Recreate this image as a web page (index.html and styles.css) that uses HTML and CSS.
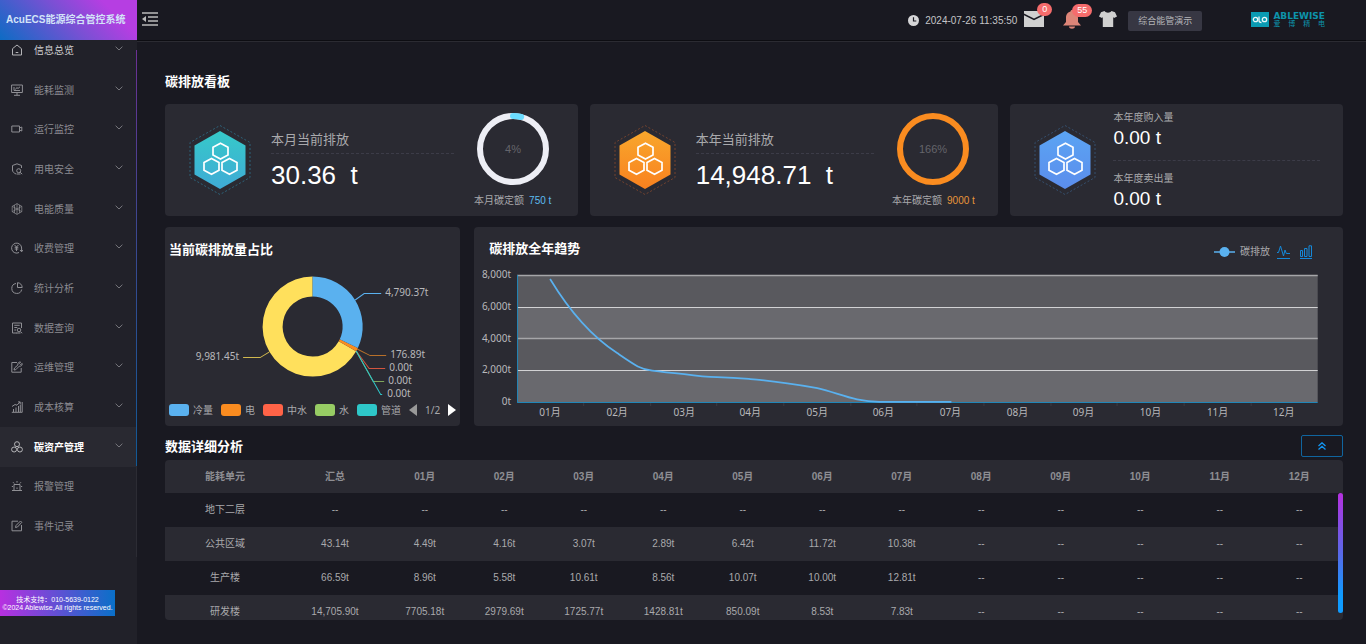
FILE: index.html
```html
<!DOCTYPE html>
<html lang="zh-CN">
<head>
<meta charset="utf-8">
<meta name="viewport" content="width=device-width, initial-scale=1">
<title>AcuECS能源综合管控系统</title>
<link rel="stylesheet" href="styles.css">
</head>
<body>
<svg class="defs" aria-hidden="true">
  <defs>
    <symbol id="chev" viewBox="0 0 8 5"><path d="M.6.7 4 4 7.400.7"/></symbol>
    <symbol id="hexes" viewBox="0 0 62 72">
      <path class="hex-dash" d="M31 1.500 61 18.500V53.500L31 70.500 1 53.500V18.500Z"/>
      <path class="hex-body" d="M31 7 56.500 21.500V50.500L31 65 5.500 50.500V21.500Z"/>
      <path class="hex-line" d="M31.500 19.200 39 23.300V31L31.500 35 24 31V23.300ZM22.500 34.500 30 38.600V46.200L22.500 50.300 15 46.200V38.600ZM40.500 34.500 48 38.600V46.200L40.500 50.300 33 46.200V38.600Z"/>
    </symbol>
    <linearGradient id="g-teal" x1="0" y1="0" x2="0" y2="1"><stop offset="0" stop-color="#36c9c9"/><stop offset="1" stop-color="#3fabd6"/></linearGradient>
    <linearGradient id="g-orange" x1="0" y1="0" x2="0" y2="1"><stop offset="0" stop-color="#f8a72c"/><stop offset="1" stop-color="#f9811f"/></linearGradient>
    <linearGradient id="g-blue" x1="0" y1="0" x2="0" y2="1"><stop offset="0" stop-color="#5ba4f3"/><stop offset="1" stop-color="#5b8dec"/></linearGradient>
  </defs>
</svg>

<aside class="sidebar">
  <div class="brand">AcuECS能源综合管控系统</div>
  <nav class="menu-view">
    <ul class="menu">
      <li><a class="item lit" href="#"><svg class="ico" viewBox="0 0 12 12"><path d="M1.500 11V4.700L6 1l4.500 3.700V11ZM4.700 8.500h2.600"/></svg><span>信息总览</span><svg class="chev"><use href="#chev"/></svg></a></li>
      <li><a class="item" href="#"><svg class="ico" viewBox="0 0 12 12"><path d="M.6 1h10.800v7.500H.6ZM3 11.300h6M6 8.500v2.800M3 3v3.500h6M4.500 5.500l1.300-2 1.200 1L9 2.800"/></svg><span>能耗监测</span><svg class="chev"><use href="#chev"/></svg></a></li>
      <li><a class="item" href="#"><svg class="ico" viewBox="0 0 12 12"><path d="M.8 3h7.700v6H.8ZM8.500 5l2.300-1v4L8.500 7"/></svg><span>运行监控</span><svg class="chev"><use href="#chev"/></svg></a></li>
      <li><a class="item" href="#"><svg class="ico" viewBox="0 0 12 12"><path d="M10.500 5V2.500L6 .8 1.500 2.500V7c0 2 1.500 3 3.500 4"/><circle cx="7.700" cy="7.700" r="2"/><path d="m9.200 9.200 2 2M5.500 11h4"/></svg><span>用电安全</span><svg class="chev"><use href="#chev"/></svg></a></li>
      <li><a class="item" href="#"><svg class="ico thin" viewBox="0 0 12 12"><path d="M6 .6 10.800 3.300v5.400L6 11.400 1.200 8.700V3.300ZM6 .6v10.800M1.200 3.300l9.600 5.400M10.800 3.300 1.200 8.700M3.500 2v8M8.500 2v8"/></svg><span>电能质量</span><svg class="chev"><use href="#chev"/></svg></a></li>
      <li><a class="item" href="#"><svg class="ico" viewBox="0 0 12 12"><path d="M8 10.500A5 5 0 1 1 10.600 6M10.600 6v3.500M9 8l1.600 1.800L12 8M3.600 3 5.500 5 7.400 3M5.500 5v4M3.700 5.300h3.600M3.700 7h3.600"/></svg><span>收费管理</span><svg class="chev"><use href="#chev"/></svg></a></li>
      <li><a class="item" href="#"><svg class="ico" viewBox="0 0 12 12"><path d="M5 1.500A5 5 0 1 0 10.700 7.500M6.500.7V5.500h4.700A4.800 4.800 0 0 0 6.500.7Z"/></svg><span>统计分析</span><svg class="chev"><use href="#chev"/></svg></a></li>
      <li><a class="item" href="#"><svg class="ico" viewBox="0 0 12 12"><path d="M10.500 6V1h-9v10H6M3.300 3.300h5.400M3.300 5.500h3M3.300 8h1.700M9.500 9.700l1.700 1.500M5.500 11h4"/><circle cx="8" cy="8" r="1.800"/></svg><span>数据查询</span><svg class="chev"><use href="#chev"/></svg></a></li>
      <li><a class="item" href="#"><svg class="ico" viewBox="0 0 12 12"><path d="M6 1.500H.8v9.700h9.400V7M3 9l.5-2 3.400-3c-.4-2 1-3.300 2.700-3L8.400 2.400l1.200 1.200L11.200 2.500c.3 1.700-1 3-3 2.700L4.800 8.700Z"/></svg><span>运维管理</span><svg class="chev"><use href="#chev"/></svg></a></li>
      <li><a class="item" href="#"><svg class="ico" viewBox="0 0 12 12"><path d="M.8 11.300h10.400V1M2.500 11V8M5 11V6.500M7.500 11V5M9.300 11V3.500M1 5.500l3-2 2 .7L9 1M7 .9h2.200V3"/></svg><span>成本核算</span><svg class="chev"><use href="#chev"/></svg></a></li>
      <li><a class="item active" href="#" aria-current="page"><svg class="ico" viewBox="0 0 12 12"><circle cx="6" cy="3.200" r="2.500"/><circle cx="3.100" cy="8.500" r="2.500"/><circle cx="8.900" cy="8.500" r="2.500"/></svg><span>碳资产管理</span><svg class="chev"><use href="#chev"/></svg></a></li>
      <li><a class="item" href="#"><svg class="ico" viewBox="0 0 12 12"><path d="M1 10.500h10M3 10V4.500h6V10M6 1v1.700M2 2.200l1.200 1.300M10 2.200 8.800 3.500M.8 6.500H2M10 6.500h1.200M6 7.500v1.500"/></svg><span>报警管理</span></a></li>
      <li><a class="item" href="#"><svg class="ico" viewBox="0 0 12 12"><path d="M7 1.200H1v9.600h9.500V5M4.500 7.500 5 5.500 9.500 1l1.300 1.300L6.500 7Z"/></svg><span>事件记录</span></a></li>
    </ul>
  </nav>
  <div class="side-track"><div class="side-thumb"></div></div>
  <footer class="support"><div>技术支持：010-5639-0122</div><div>©2024 Ablewise,All rights reserved.</div></footer>
</aside>

<div class="page">
  <header class="topbar">
    <button class="icon-btn fold" aria-label="收起菜单"><svg width="16" height="14" viewBox="0 0 16 14"><path d="M0 1h16M6 5h10M6 9h10M0 13h16" stroke="#bbb" stroke-width="1.500"/><path d="M0 7 4 4v6Z" fill="#bbb"/></svg></button>
    <div class="tools">
      <svg width="11" height="11" viewBox="0 0 11 11"><circle cx="5.500" cy="5.500" r="5.500" fill="#d5d5d7"/><path d="M5.500 2.300V6h2.800" fill="none" stroke="#191921" stroke-width="1.200"/></svg>
      <time class="clock">2024-07-26 11:35:50</time>
      <button class="icon-btn mail" aria-label="消息"><svg width="20" height="16" viewBox="0 0 20 16"><path d="M0 0h20v2.500l-10 5-10-5ZM0 4.200l10 5 10-5V16H0Z" fill="#d0d0d0"/></svg><span class="badge">0</span></button>
      <button class="icon-btn bell" aria-label="报警"><svg width="18" height="19" viewBox="0 0 18 19"><path d="M9 0c1 0 1.500.7 1.500 1.500C14 2.500 15 5 15 8v4l3 3.500H0L3 12V8c0-3 1-5.500 4.500-6.500C7.500.7 8 0 9 0ZM6 16.500h6c0 3-6 3-6 0Z" fill="#dd8578"/></svg><span class="badge">55</span></button>
      <button class="icon-btn shirt" aria-label="主题"><svg width="18" height="16" viewBox="0 0 18 16"><path d="M5.500 0c1.500 2.200 5.500 2.200 7 0L16 1.200l2 4.300-3 1.500-.8-1V16H3.800V6L3 7 0 5.500 2 1.200Z" fill="#d0d0d0"/></svg></button>
      <button class="user">综合能管演示</button>
      <div class="logo">
        <svg width="18" height="15" viewBox="0 0 18 15"><path d="M0 0h18v15H0Z" fill="#0a9bb3"/><g fill="none" stroke="#e8f6f8" stroke-width="1.300"><circle cx="4.500" cy="7.500" r="2.200"/><circle cx="13.500" cy="7.500" r="2.200"/><path d="M8 4.500v4q0 2 2.500 2"/></g></svg>
        <div class="logo-text"><div class="logo-en">ABLEWISE</div><div class="logo-cn"><span>爱</span><span>博</span><span>精</span><span>电</span></div></div>
      </div>
    </div>
  </header>

  <main class="main">
    <h2 class="title">碳排放看板</h2>
    <section class="cards">
      <article class="card teal">
        <svg class="hex"><use href="#hexes"/></svg>
        <div class="stat"><div class="stat-name">本月当前排放</div><div class="stat-value">30.36&nbsp; t</div></div>
        <div class="quota">
          <svg class="ring" viewBox="0 0 72 72"><circle class="ring-base" cx="36" cy="36" r="33"/><circle class="ring-bar" cx="36" cy="36" r="33" pathLength="100" stroke-dasharray="4 96" transform="rotate(-90 36 36)"/><text x="36" y="40">4%</text></svg>
          <div class="caption">本月碳定额<b>750 t</b></div>
        </div>
      </article>
      <article class="card orange">
        <svg class="hex"><use href="#hexes"/></svg>
        <div class="stat"><div class="stat-name">本年当前排放</div><div class="stat-value">14,948.71&nbsp; t</div></div>
        <div class="quota">
          <svg class="ring" viewBox="0 0 72 72"><circle class="ring-base" cx="36" cy="36" r="33"/><text x="36" y="40">166%</text></svg>
          <div class="caption">本年碳定额<b>9000 t</b></div>
        </div>
      </article>
      <article class="card blue">
        <svg class="hex"><use href="#hexes"/></svg>
        <div class="trades">
          <div class="trade"><div class="trade-name">本年度购入量</div><div class="trade-value">0.00 t</div></div>
          <div class="trade"><div class="trade-name">本年度卖出量</div><div class="trade-value">0.00 t</div></div>
        </div>
      </article>
    </section>

    <section class="charts">
      <article class="panel share">
        <h2 class="title">当前碳排放量占比</h2>
        <svg class="plot" viewBox="0 40 295 132" role="img" aria-label="当前碳排放量占比">
          <path d="M191 124.200A50 50 0 1 1 147.500 49.500V69.500A30 30 0 1 0 173.600 114.300Z" fill="#ffe05c"/>
          <path d="M192.700 120.900A50 50 0 0 1 191 124.200L173.600 114.300A30 30 0 0 0 174.600 112.300Z" fill="#fa8c20"/>
          <path d="M147.500 49.500A50 50 0 0 1 192.700 120.900L174.600 112.300A30 30 0 0 0 147.500 69.500Z" fill="#5ab1ef"/>
          <g fill="none">
            <path d="M190 73 199 66.500H216" stroke="#5ab1ef"/>
            <path d="M192 122 205 128.500H221" stroke="#b8702a"/>
            <path d="M191 124 204 141.500H220" stroke="#d2553f"/>
            <path d="M191 124 208 154.500H219" stroke="#7fa65c"/>
            <path d="M191 124 215.500 167.500H217" stroke="#2ec7c9"/>
            <path d="M104 125 95 130.500H78" stroke="#d0b84e"/>
          </g>
          <g class="label">
            <text x="220" y="69">4,790.37t</text>
            <text x="225" y="131">176.89t</text>
            <text x="224" y="144">0.00t</text>
            <text x="223" y="157">0.00t</text>
            <text x="222" y="170">0.00t</text>
            <text x="74" y="133" text-anchor="end">9,981.45t</text>
          </g>
        </svg>
        <div class="legend">
          <span class="key"><i class="c-cold"></i>冷量</span><span class="key"><i class="c-elec"></i>电</span><span class="key"><i class="c-grey"></i>中水</span><span class="key"><i class="c-water"></i>水</span><span class="key"><i class="c-pipe"></i>管道</span>
          <span class="pager"><button class="icon-btn" aria-label="上一页"><svg width="8" height="12" viewBox="0 0 8 12"><path d="M8 0v12L0 6Z" fill="#999"/></svg></button>1/2<button class="icon-btn" aria-label="下一页"><svg width="8" height="12" viewBox="0 0 8 12"><path d="M0 0v12l8-6Z" fill="#fff"/></svg></button></span>
        </div>
      </article>

      <article class="panel trend">
        <div class="trend-head">
          <h2 class="title">碳排放全年趋势</h2>
          <div class="trend-tools">
            <svg width="21" height="10" viewBox="0 0 21 10"><path d="M0 5h21" stroke="#5ab1ef" stroke-width="1.500"/><circle cx="10.500" cy="5" r="5" fill="#5ab1ef"/></svg>
            <span>碳排放</span>
            <button class="icon-btn" aria-label="折线图"><svg width="13" height="14" viewBox="0 0 13 14"><path d="M0 7.500h1.500L3.500 1l3 10L8 5l1.300 3.500H13M0 13.500h13" fill="none" stroke="#1588d8"/></svg></button>
            <button class="icon-btn bars" aria-label="柱状图"><svg width="12" height="14" viewBox="0 0 12 14"><path d="M.5 11.500V5.500h2v6ZM4.500 11.500V3.500h2.500v8ZM9 11.500V.8h2.500v10.700ZM0 13.500h12" fill="none" stroke="#1588d8"/></svg></button>
          </div>
        </div>
        <svg class="plot" viewBox="0 40 868 159" role="img" aria-label="碳排放全年趋势">
          <path d="M43 48h800v32H43ZM43 112h800v32H43Z" fill="#59595e"/>
          <path d="M43 80h800v32H43ZM43 144h800v31H43Z" fill="#69696e"/>
          <path d="M43 48.500h800M43 111.500h800" stroke="#a6a6a9" stroke-width="1.500"/>
          <path d="M43 80.500h800M43 143.500h800" stroke="#d2d2d4"/>
          <path d="M109.500 176v3M176.500 176v3M242.500 176v3M309.500 176v3M376.500 176v3M442.500 176v3M509.500 176v3M576.500 176v3M642.500 176v3M709.500 176v3M776.500 176v3" stroke="#3b3b43"/>
          <path d="M43.500 48V175.500H843" fill="none" stroke="#2086b8"/>
          <path d="M76 52C99 90 120 111 143 126C162 139 166 142 178 143.500C190 145 195 145.500 210 147C230 150 235 150 243 150C260 150.500 265 151 276 152C300 154 325 158 343 161C365 166 380 174.700 405 174.700H477" fill="none" stroke="#5ab1ef" stroke-width="1.700"/>
          <g class="label" text-anchor="end">
            <text x="37" y="51">8,000t</text><text x="37" y="83">6,000t</text><text x="37" y="115">4,000t</text><text x="37" y="146">2,000t</text><text x="37" y="178">0t</text>
          </g>
          <g class="label" text-anchor="middle">
            <text x="76" y="189">01月</text><text x="143" y="189">02月</text><text x="210" y="189">03月</text><text x="276" y="189">04月</text><text x="343" y="189">05月</text><text x="409" y="189">06月</text><text x="476" y="189">07月</text><text x="543" y="189">08月</text><text x="609" y="189">09月</text><text x="676" y="189">10月</text><text x="743" y="189">11月</text><text x="809" y="189">12月</text>
          </g>
        </svg>
      </article>
    </section>

    <section class="detail">
      <div class="detail-head">
        <h2 class="title">数据详细分析</h2>
        <button class="collapse" aria-label="收起"><svg width="8" height="8" viewBox="0 0 8 8"><path d="M.5 4 4 .8 7.500 4M.5 7.500 4 4.300 7.500 7.500" fill="none" stroke="#1296f3" stroke-width="1.300"/></svg></button>
      </div>
      <div class="sheet">
        <table class="grid">
          <colgroup><col class="col-unit"><col class="col-sum"><col span="12"></colgroup>
          <thead><tr><th>能耗单元</th><th>汇总</th><th>01月</th><th>02月</th><th>03月</th><th>04月</th><th>05月</th><th>06月</th><th>07月</th><th>08月</th><th>09月</th><th>10月</th><th>11月</th><th>12月</th></tr></thead>
          <tbody>
            <tr><td>地下二层</td><td>--</td><td>--</td><td>--</td><td>--</td><td>--</td><td>--</td><td>--</td><td>--</td><td>--</td><td>--</td><td>--</td><td>--</td><td>--</td></tr>
            <tr><td>公共区域</td><td>43.14t</td><td>4.49t</td><td>4.16t</td><td>3.07t</td><td>2.89t</td><td>6.42t</td><td>11.72t</td><td>10.38t</td><td>--</td><td>--</td><td>--</td><td>--</td><td>--</td></tr>
            <tr><td>生产楼</td><td>66.59t</td><td>8.96t</td><td>5.58t</td><td>10.61t</td><td>8.56t</td><td>10.07t</td><td>10.00t</td><td>12.81t</td><td>--</td><td>--</td><td>--</td><td>--</td><td>--</td></tr>
            <tr><td>研发楼</td><td>14,705.90t</td><td>7705.18t</td><td>2979.69t</td><td>1725.77t</td><td>1428.81t</td><td>850.09t</td><td>8.53t</td><td>7.83t</td><td>--</td><td>--</td><td>--</td><td>--</td><td>--</td></tr>
          </tbody>
        </table>
        <div class="scroll"><div class="thumb"></div></div>
      </div>
    </section>
  </main>
</div>
</body>
</html>
```

FILE: styles.css
```css
* { box-sizing: border-box; }

body {
  margin: 0;
  min-height: 100vh;
  display: grid;
  grid-template-columns: 137px minmax(0, 1fr);
  background: #191921;
  color: #a9a9ac;
  font: 10px/14px "Liberation Sans", "Noto Sans CJK SC", sans-serif;
}

button { font: inherit; color: inherit; cursor: pointer; }
svg { display: block; }
.defs { position: absolute; width: 0; height: 0; }

.icon-btn {
  position: relative;
  padding: 0;
  border: 0;
  background: none;
}

.title {
  margin: 0;
  color: #fff;
  font-size: 13px;
  line-height: 20px;
  font-weight: 700;
}

/* Sidebar */
.sidebar {
  position: relative;
  background: #212129;
}

.brand {
  position: relative;
  z-index: 1;
  height: 40px;
  padding-left: 6px;
  background: linear-gradient(45deg, #0d6cc4, #7a50d4 50%, #b63ee2 80%);
  color: #d3e4f8;
  font-weight: 700;
  line-height: 40px;
  white-space: nowrap;
}

.menu-view { overflow: hidden; }

.menu {
  display: grid;
  grid-auto-rows: 1fr;
  height: 516px;
  margin: -10px 0 0;
  padding: 0;
  list-style: none;
}

.item {
  display: flex;
  align-items: center;
  gap: 11px;
  height: 100%;
  padding: 0 14px 0 11px;
  color: #8b8b91;
  text-decoration: none;
}

.item span { padding-top: 2px; }
.item.lit { color: #d0d0d2; }
.item.active { background: #292931; color: #fff; font-weight: 700; }

.ico {
  width: 12px;
  height: 12px;
  fill: none;
  stroke: #8f8f94;
  stroke-width: 1;
}

.ico.thin { stroke-width: .7; }
.lit .ico, .active .ico { stroke: #b4b4b7; }

.chev {
  width: 8px;
  height: 5px;
  margin: 0 0 3px auto;
  fill: none;
  stroke: #77777d;
}

.side-track {
  position: absolute;
  top: 50px;
  right: 0;
  width: 1px;
  height: 507px;
  background: #2c2c34;
}

.side-thumb {
  height: 416px;
  background: linear-gradient(#6d3095, #3f4690 40%, #115a96);
}

.support {
  width: 115px;
  margin-top: 44px;
  padding: 6px 0 4px;
  background: linear-gradient(90deg, #b830e0, #0a70c8);
  color: #fff;
  font-size: 7px;
  line-height: 8px;
  text-align: center;
  white-space: nowrap;
}

/* Top bar */
.topbar {
  display: flex;
  align-items: center;
  justify-content: space-between;
  height: 42px;
  padding: 0 41px 0 5px;
  border-bottom: 1px solid #2b2b32;
  box-shadow: inset 0 -1px #0d0d12;
}

.fold { margin-bottom: 4px; }
.tools { display: flex; align-items: center; color: #c4c4c6; }
.clock { margin-left: 6px; }
.mail { margin: 0 0 3px 7px; }
.bell { margin: 0 0 3px 19px; }
.shirt { margin: 0 0 3px 18px; }

.badge {
  position: absolute;
  top: -8px;
  left: 13px;
  min-width: 14px;
  padding: 0 5px;
  border-radius: 7px;
  background: #f56c6c;
  color: #fff;
  font-size: 9px;
  line-height: 13px;
}

.bell .badge { top: -6px; left: 9px; }

.user {
  height: 20px;
  margin-left: 11px;
  padding: 0 10px;
  border: 0;
  border-radius: 2px;
  background: #373743;
  color: #b5b5b9;
  font-size: 9px;
}

.logo {
  display: flex;
  gap: 4px;
  margin: 0 0 2px 49px;
  color: #0d93ab;
}

.logo-en { font: 700 9px/8px "DejaVu Sans", sans-serif; }
.logo-cn { display: flex; justify-content: space-between; font-size: 7px; line-height: 7px; }

/* Dashboard */
.main { padding: 30px 23px 24px 28px; }

.cards {
  display: grid;
  grid-template-columns: 412fr 408fr 332fr;
  gap: 12px;
  margin: 12px 0 11px;
}

.card {
  display: flex;
  align-items: center;
  min-height: 112px;
  padding: 0 23px 0 24px;
  border-radius: 4px;
  background: #2a2a32;
}

.hex { flex: none; width: 62px; height: 72px; }
.hex-dash { fill: none; stroke: var(--dash); stroke-dasharray: 2 2; }
.hex-body { fill: var(--body); }
.hex-line { fill: none; stroke: #fff; stroke-width: 1.7px; }

.teal { --body: url(#g-teal); --dash: #2d6279; --ring: #edeef5; --accent: #5cbcf0; }
.orange { --body: url(#g-orange); --dash: #74432f; --ring: #fa8c20; --accent: #e8963a; }
.blue { --body: url(#g-blue); --dash: #35506f; }

.stat { flex: 1; margin: 0 17px 0 20px; white-space: nowrap; }

.stat-name {
  padding: 1px 0 4px;
  border-bottom: 1px dashed #3c3c48;
  font-size: 13px;
  line-height: 18px;
}

.stat-value { padding-top: 5px; color: #fff; font-size: 26px; line-height: 32px; }

.quota {
  display: flex;
  flex-direction: column;
  align-items: center;
  gap: 9px;
  width: 84px;
  white-space: nowrap;
}

.ring { width: 72px; height: 72px; }
.ring circle { fill: none; stroke-width: 6px; }
.ring-base { stroke: var(--ring); }
.ring-bar { stroke: #6bdcff; stroke-linecap: round; }
.ring text { fill: #65656b; font-size: 11px; text-anchor: middle; }
.caption b { margin-left: 5px; color: var(--accent); font-weight: 400; }

.trades { flex: 1; margin-left: 17px; }
.trade { padding: 5px 0 10px; line-height: 14px; }
.trade + .trade { padding: 11px 0 4px; border-top: 1px dashed #3c3c48; }
.trade-value { padding-top: 1px; color: #fff; font-size: 19px; line-height: 24px; }

.charts {
  display: grid;
  grid-template-columns: 295fr 868fr;
  gap: 14px;
}

.panel { border-radius: 4px; background: #2a2a32; }
.plot { width: 100%; height: auto; }
.label text { fill: #b8b8bb; font: 10px "Noto Sans", "Noto Sans CJK SC", sans-serif; }

.share .title { padding: 13px 4px 7px; }

.legend {
  display: flex;
  gap: 8px;
  align-items: center;
  padding: 4px 4px 9px;
  font-family: "Noto Sans", "Noto Sans CJK SC", sans-serif;
  white-space: nowrap;
}

.key { display: flex; gap: 4px; align-items: center; }
.key i { width: 20px; height: 12px; border-radius: 3px; }
.c-cold { background: #5ab1ef; }
.c-elec { background: #fa8c20; }
.c-grey { background: #ff6347; }
.c-water { background: #97cc64; }
.c-pipe { background: #2ec7c9; }
.pager { display: flex; gap: 8px; align-items: center; }

.trend-head {
  display: flex;
  justify-content: space-between;
  align-items: center;
  height: 40px;
  padding: 3px 31px 0 15px;
}

.trend-tools { display: flex; gap: 5px; align-items: center; padding-top: 6px; }
.trend-tools .icon-btn { margin-left: 2px; }
.trend-tools .bars { margin-left: 5px; }

/* Detail table */
.detail-head {
  display: flex;
  justify-content: space-between;
  align-items: center;
  padding: 9px 0 3px;
}

.detail-head .title { padding-top: 2px; }

.collapse {
  display: grid;
  place-items: center;
  width: 42px;
  height: 22px;
  padding: 0;
  border: 1px solid #10659f;
  border-radius: 2px;
  background: none;
}

.sheet {
  position: relative;
  max-height: 160px;
  overflow: hidden;
  padding-right: 4px;
  border-radius: 4px;
  background: #2a2a32;
}

.grid {
  width: 100%;
  border-collapse: collapse;
  table-layout: fixed;
  text-align: center;
}

.col-unit { width: 120px; }
.col-sum { width: 100px; }
.grid th { height: 33px; padding: 0; color: #8e8e93; }
.grid td { height: 34px; padding: 0; }
.grid tbody tr:nth-child(odd) { background: #191921; }

.scroll {
  position: absolute;
  top: 33px;
  right: 0;
  bottom: 0;
  width: 5px;
}

.thumb {
  height: 120px;
  border-radius: 3px;
  background: linear-gradient(#b630e0, #5a68e8 50%, #0f9bff 85%);
}
```
